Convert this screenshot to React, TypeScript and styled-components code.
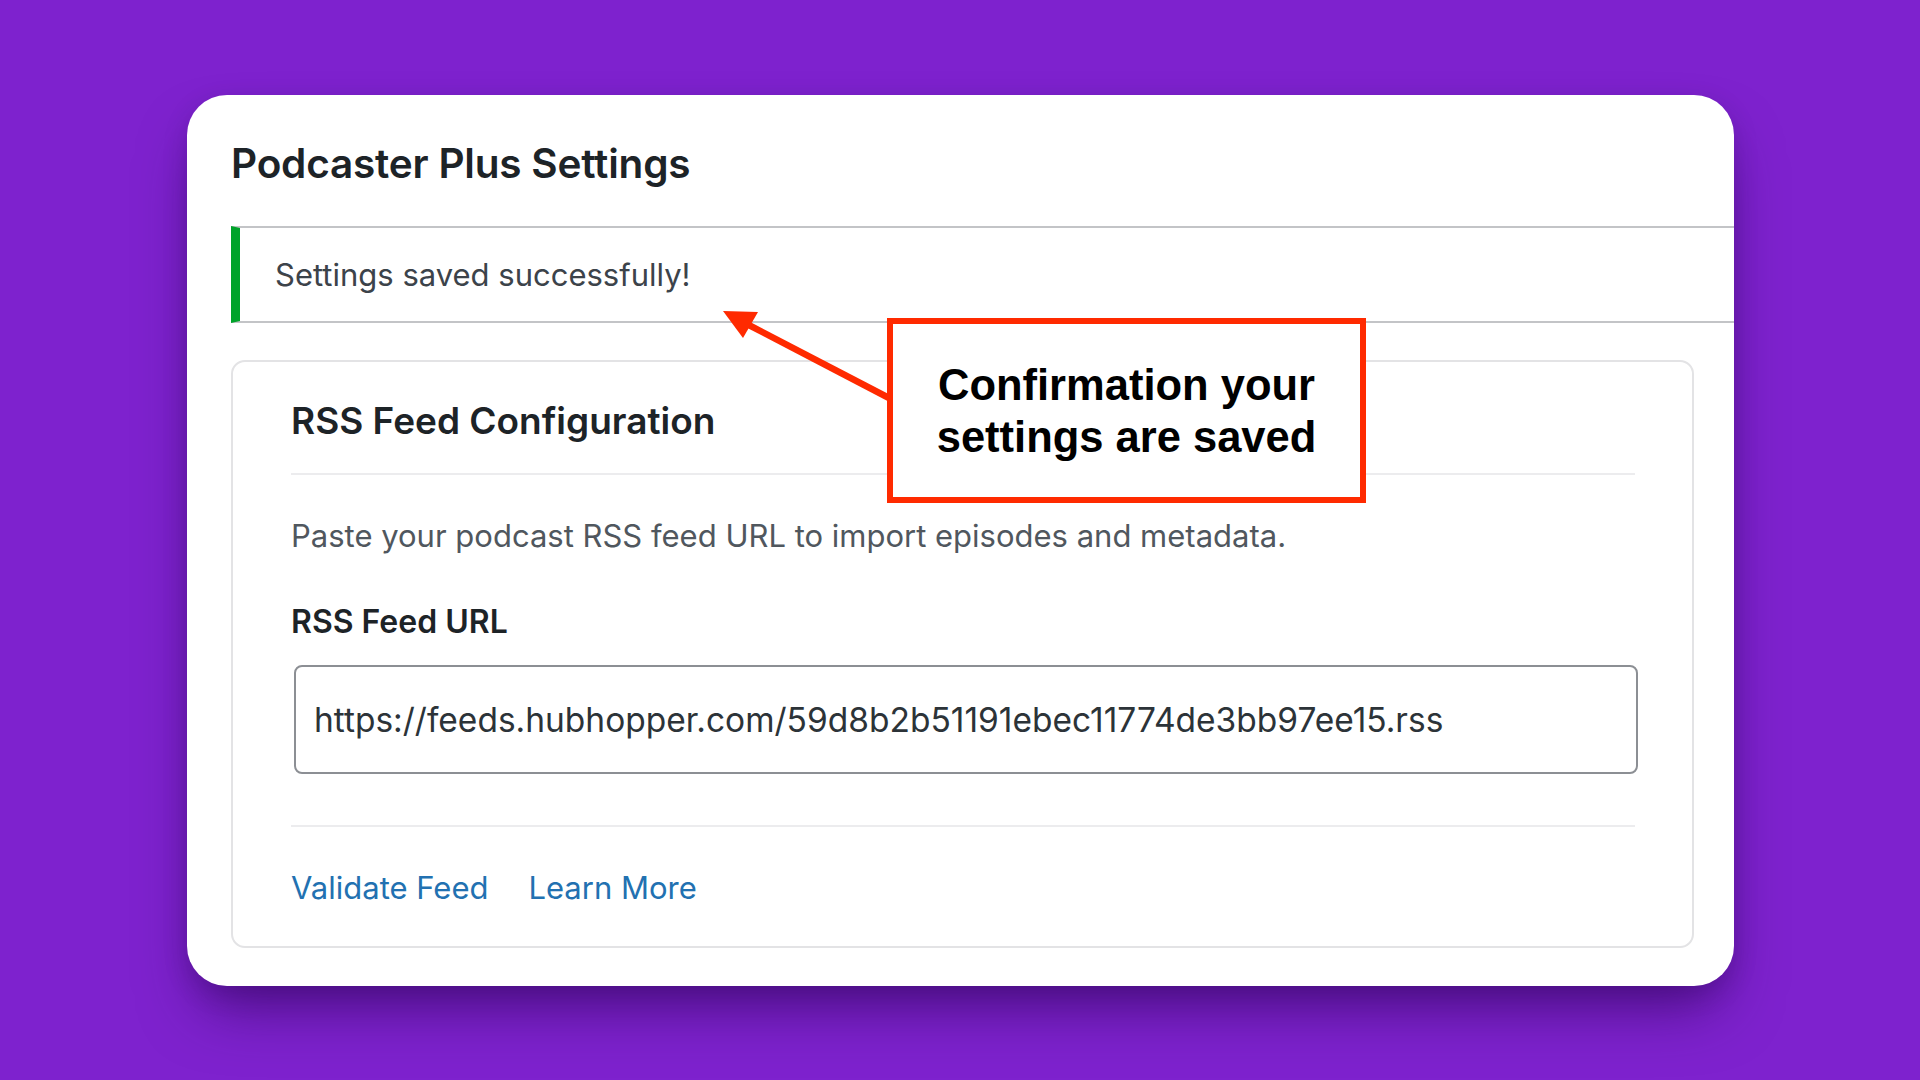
import React from 'react'
import styled, { createGlobalStyle } from 'styled-components'

const GlobalStyle = createGlobalStyle`
  html, body {
    margin: 0;
    padding: 0;
  }
  body {
    background: #7e22ce;
    font-family: Inter, "Noto Sans", sans-serif;
  }
`

const Page = styled.main`
  min-height: 100vh;
  box-sizing: border-box;
  padding: 95px 0 0 187px;
  background: #7e22ce;
`

const Card = styled.section`
  position: relative;
  box-sizing: border-box;
  width: 1547px;
  padding: 45px 40px 38px 44px;
  background: #fff;
  border-radius: 40px;
  overflow: hidden;
  box-shadow: 0 34px 60px -14px rgba(40, 0, 80, 0.6), 0 8px 24px rgba(40, 0, 80, 0.18);
`

const PageTitle = styled.h1`
  margin: 0;
  color: #1d2327;
  font-size: 40.5px;
  line-height: 48px;
  font-weight: 600;
  letter-spacing: -0.2px;
`

const Notice = styled.div`
  margin: 38px -40px 0 0;
  padding: 26px 35px;
  background: #fff;
  border-top: 2px solid #c3c4c7;
  border-bottom: 2px solid #c3c4c7;
  border-left: 9px solid #00a32a;
  color: #3c434a;
  font-size: 31px;
  line-height: 41px;
`

const Panel = styled.div`
  margin-top: 37px;
  padding: 37px 57px 38px 58px;
  border: 2px solid #e3e3e5;
  border-radius: 14px;
`

const PanelTitle = styled.h2`
  margin: 0;
  padding-bottom: 30px;
  border-bottom: 2px solid #ececee;
  color: #1d2327;
  font-size: 37px;
  line-height: 44px;
  font-weight: 600;
`

const Description = styled.p`
  margin: 40px 0 0;
  color: #50575e;
  font-size: 31px;
  line-height: 42px;
`

const FieldLabel = styled.label`
  display: block;
  margin-top: 45px;
  color: #1d2327;
  font-size: 32px;
  line-height: 40px;
  font-weight: 600;
`

const UrlInput = styled.input`
  display: block;
  box-sizing: border-box;
  width: 1344px;
  height: 109px;
  margin: 23px 0 0 3px;
  padding: 0 18px;
  border: 2.5px solid #8c8f94;
  border-radius: 8px;
  background: #fff;
  color: #2c3338;
  font-family: Inter, "Noto Sans", sans-serif;
  font-size: 33.5px;
  outline: none;
`

const Footer = styled.div`
  display: flex;
  gap: 40px;
  margin-top: 51px;
  padding-top: 41px;
  border-top: 2px solid #ececee;
`

const TextLink = styled.a`
  color: #2271b1;
  font-size: 31px;
  line-height: 40px;
  text-decoration: none;
`

const Callout = styled.div`
  position: absolute;
  left: 700px;
  top: 223px;
  box-sizing: border-box;
  width: 479px;
  height: 185px;
  display: flex;
  align-items: center;
  justify-content: center;
  border: 6px solid #ff2a00;
  background: #fff;
  color: #000;
  font-family: "Liberation Sans", Arial, sans-serif;
  font-weight: 700;
  font-size: 43.5px;
  line-height: 52px;
  text-align: center;
`

const ArrowLayer = styled.svg`
  position: absolute;
  left: 0;
  top: 0;
  width: 100%;
  height: 100%;
  pointer-events: none;
`

export default function App() {
  return (
    <>
      <GlobalStyle />
      <Page>
        <Card>
          <PageTitle>Podcaster Plus Settings</PageTitle>
          <Notice>Settings saved successfully!</Notice>
          <Panel>
            <PanelTitle>RSS Feed Configuration</PanelTitle>
            <Description>
              Paste your podcast RSS feed URL to import episodes and metadata.
            </Description>
            <FieldLabel htmlFor="rss-url">RSS Feed URL</FieldLabel>
            <UrlInput
              id="rss-url"
              type="text"
              readOnly
              value="https://feeds.hubhopper.com/59d8b2b51191ebec11774de3bb97ee15.rss"
            />
            <Footer>
              <TextLink href="#">Validate Feed</TextLink>
              <TextLink href="#">Learn More</TextLink>
            </Footer>
          </Panel>
          <ArrowLayer>
            <line x1="702" y1="303" x2="556" y2="227" stroke="#ff2a00" strokeWidth="6.5" />
            <polygon points="536,216 571,217 556,243" fill="#ff2a00" />
          </ArrowLayer>
          <Callout>
            Confirmation your
            <br />
            settings are saved
          </Callout>
        </Card>
      </Page>
    </>
  )
}
